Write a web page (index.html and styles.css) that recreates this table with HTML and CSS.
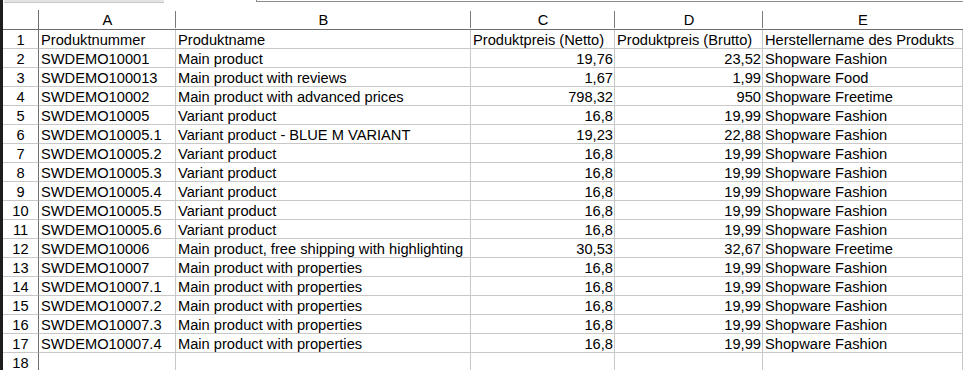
FILE: index.html
```html
<!DOCTYPE html>
<html lang="de">
<head>
<meta charset="utf-8">
<title>Produkte</title>
<link rel="stylesheet" href="styles.css">
</head>
<body>
<div class="app">
  <div class="topbar">
    <div class="tab"></div>
    <div class="field"></div>
  </div>
  <div class="sheet">
    <div class="corner"></div><div class="colhead">A</div><div class="colhead">B</div><div class="colhead">C</div><div class="colhead">D</div><div class="colhead last">E</div>

    <div class="rh">1</div><div class="c">Produktnummer</div><div class="c">Produktname</div><div class="c">Produktpreis (Netto)</div><div class="c">Produktpreis (Brutto)</div><div class="c">Herstellername des Produkts</div>
    <div class="rh">2</div><div class="c">SWDEMO10001</div><div class="c">Main product</div><div class="c n">19,76</div><div class="c n">23,52</div><div class="c">Shopware Fashion</div>
    <div class="rh">3</div><div class="c">SWDEMO100013</div><div class="c">Main product with reviews</div><div class="c n">1,67</div><div class="c n">1,99</div><div class="c">Shopware Food</div>
    <div class="rh">4</div><div class="c">SWDEMO10002</div><div class="c">Main product with advanced prices</div><div class="c n">798,32</div><div class="c n">950</div><div class="c">Shopware Freetime</div>
    <div class="rh">5</div><div class="c">SWDEMO10005</div><div class="c">Variant product</div><div class="c n">16,8</div><div class="c n">19,99</div><div class="c">Shopware Fashion</div>
    <div class="rh">6</div><div class="c">SWDEMO10005.1</div><div class="c">Variant product - BLUE M VARIANT</div><div class="c n">19,23</div><div class="c n">22,88</div><div class="c">Shopware Fashion</div>
    <div class="rh">7</div><div class="c">SWDEMO10005.2</div><div class="c">Variant product</div><div class="c n">16,8</div><div class="c n">19,99</div><div class="c">Shopware Fashion</div>
    <div class="rh">8</div><div class="c">SWDEMO10005.3</div><div class="c">Variant product</div><div class="c n">16,8</div><div class="c n">19,99</div><div class="c">Shopware Fashion</div>
    <div class="rh">9</div><div class="c">SWDEMO10005.4</div><div class="c">Variant product</div><div class="c n">16,8</div><div class="c n">19,99</div><div class="c">Shopware Fashion</div>
    <div class="rh">10</div><div class="c">SWDEMO10005.5</div><div class="c">Variant product</div><div class="c n">16,8</div><div class="c n">19,99</div><div class="c">Shopware Fashion</div>
    <div class="rh">11</div><div class="c">SWDEMO10005.6</div><div class="c">Variant product</div><div class="c n">16,8</div><div class="c n">19,99</div><div class="c">Shopware Fashion</div>
    <div class="rh">12</div><div class="c">SWDEMO10006</div><div class="c">Main product, free shipping with highlighting</div><div class="c n">30,53</div><div class="c n">32,67</div><div class="c">Shopware Freetime</div>
    <div class="rh">13</div><div class="c">SWDEMO10007</div><div class="c">Main product with properties</div><div class="c n">16,8</div><div class="c n">19,99</div><div class="c">Shopware Fashion</div>
    <div class="rh">14</div><div class="c">SWDEMO10007.1</div><div class="c">Main product with properties</div><div class="c n">16,8</div><div class="c n">19,99</div><div class="c">Shopware Fashion</div>
    <div class="rh">15</div><div class="c">SWDEMO10007.2</div><div class="c">Main product with properties</div><div class="c n">16,8</div><div class="c n">19,99</div><div class="c">Shopware Fashion</div>
    <div class="rh">16</div><div class="c">SWDEMO10007.3</div><div class="c">Main product with properties</div><div class="c n">16,8</div><div class="c n">19,99</div><div class="c">Shopware Fashion</div>
    <div class="rh">17</div><div class="c">SWDEMO10007.4</div><div class="c">Main product with properties</div><div class="c n">16,8</div><div class="c n">19,99</div><div class="c">Shopware Fashion</div>
    <div class="rh">18</div><div class="c"></div><div class="c"></div><div class="c"></div><div class="c"></div><div class="c"></div>
  </div>
</div>
</body>
</html>
```

FILE: styles.css
```css
html, body {
  margin: 0;
  padding: 0;
  background: #ffffff;
}

.app {
  width: 960px;
  height: 370px;
  overflow: hidden;
  border-left: 3px solid #1e1e1e;
  display: flex;
  flex-direction: column;
  font-family: "Liberation Sans", Arial, sans-serif;
  font-size: 14.67px;
  color: #000;
}

.topbar {
  height: 10px;
  flex: none;
  display: flex;
  align-items: flex-start;
}

.tab {
  margin-left: 1px;
  width: 160px;
  height: 3px;
  background: #e4e4e4;
  border-bottom: 1px solid #c8c8c8;
  box-sizing: border-box;
}

.field {
  margin-left: 92px;
  flex: 1;
  height: 2px;
  border-left: 1px solid #8c8c8c;
  border-bottom: 1px solid #8c8c8c;
  box-sizing: border-box;
}

.sheet {
  display: grid;
  grid-template-columns: 36px 137px 295px 144px 148px 1fr;
  grid-template-rows: 20px;
  grid-auto-rows: 19px;
}

.corner,
.colhead {
  box-sizing: border-box;
  border-bottom: 1px solid #6e6e6e;
  background: linear-gradient(#7a7a7a, #7a7a7a) right 1px / 1px 17px no-repeat;
  text-align: center;
  line-height: 19px;
  padding-top: 1px;
}

.corner {
  border-right: 1px solid #6e6e6e;
  background: none;
}

.colhead.last {
  background: none;
}

.rh {
  box-sizing: border-box;
  border-right: 1px solid #6e6e6e;
  border-bottom: 1px solid #c8c8c8;
  text-align: center;
  line-height: 16px;
  padding-top: 2px;
}

.c {
  box-sizing: border-box;
  border-right: 1px solid #c8c8c8;
  border-bottom: 1px solid #c8c8c8;
  line-height: 16px;
  padding: 2px 1px 0 2px;
  white-space: nowrap;
  overflow: hidden;
}

.c.n {
  text-align: right;
}
```
